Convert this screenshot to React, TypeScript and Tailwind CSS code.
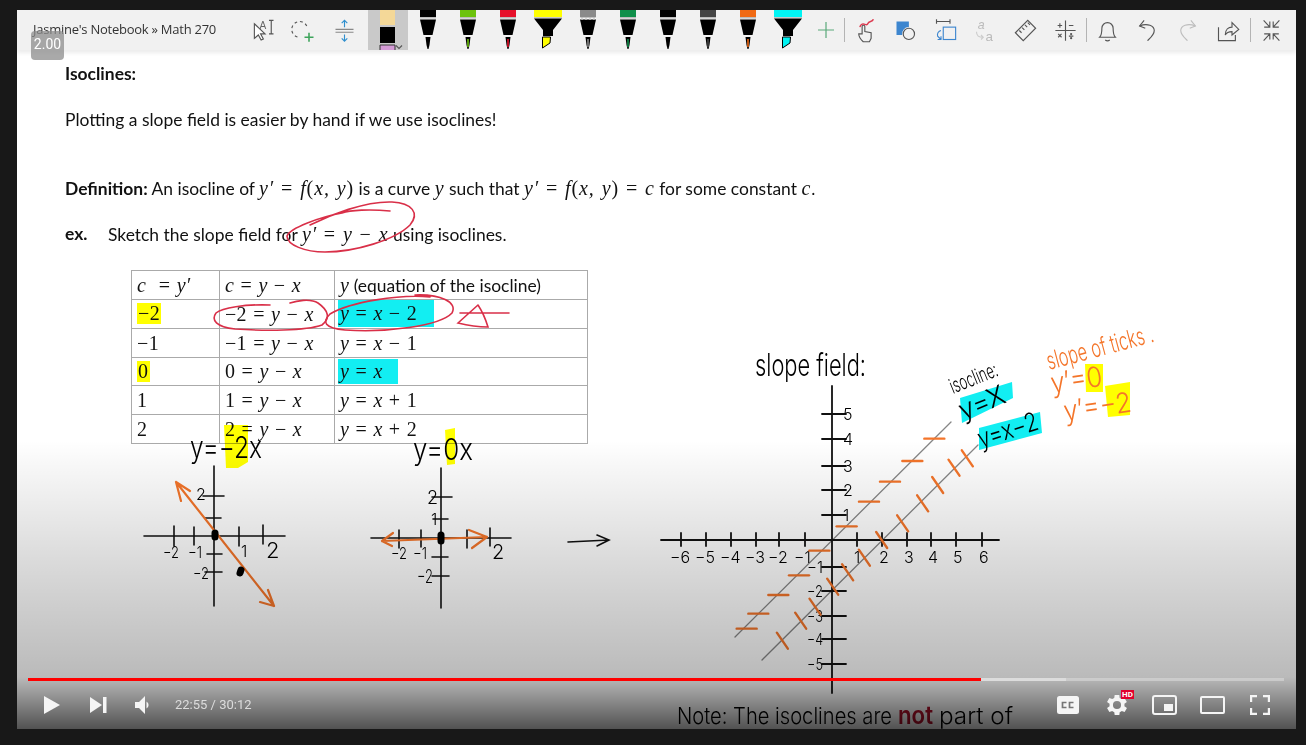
import React from "react";

const I = ({ children }: { children: React.ReactNode }) => (
  <span className="italic font-['Liberation_Serif',serif] text-[20px] tracking-[0.3px] [word-spacing:1px]">{children}</span>
);
const D = ({ children }: { children: React.ReactNode }) => (
  <span className="italic font-['Liberation_Serif',serif] text-[20px] tracking-[0.9px] [word-spacing:1px]">{children}</span>
);
const M = ({ children }: { children: React.ReactNode }) => (
  <span className="font-['Liberation_Serif',serif] text-[20px] tracking-[0.5px]">{children}</span>
);

const Slot = ({ children }: { children: React.ReactNode }) => (
  <div className="w-10 h-10 flex items-center justify-center shrink-0">{children}</div>
);
const Sep = () => <div className="w-px h-6 bg-[#b4b4b4] shrink-0" />;

const Pen = ({ cap, tip, zig }: { cap: string; tip: string; zig?: boolean }) => (
  <Slot>
    <svg width="24" height="40" viewBox="0 0 24 40">
      <rect x="4" y="0" width="16" height="7" fill={cap} />
      <rect x="4" y="7" width="16" height="1.5" fill="#bdbdbd" />
      <path d="M4 9.5H20L16.5 25H7.5Z" fill="#000" />
      {zig && <path d="M4 7L6 10L8 7.5L10 10L12 7.5L14 10L16 7.5L18 10L20 7V9H4Z" fill="#fff" />}
      <path d="M9.5 27H14.5L13.5 35L12.5 39H11.5L10.5 35Z" fill="#000" />
      <path d="M11.2 29H12.8V37H11.2Z" fill={tip} />
    </svg>
  </Slot>
);

const Marker = ({ cap }: { cap: string }) => (
  <Slot>
    <svg width="30" height="40" viewBox="0 0 30 40">
      <rect x="1" y="0" width="28" height="7" fill={cap} />
      <rect x="1" y="7" width="28" height="1.2" fill="#c8c8c8" />
      <path d="M1 8.5H29L20 20L20 26H10V20Z" fill="#000" />
      <path d="M9.5 27H17.5L17 33L9.5 38Z" fill={cap} stroke="#000" strokeWidth="1" />
    </svg>
  </Slot>
);

const Eraser = () => (
  <div className="w-10 h-10 bg-[#c9c9c9] relative shrink-0 flex justify-center overflow-hidden">
    <svg width="40" height="40" viewBox="0 0 40 40">
      <rect x="12" y="0" width="15" height="15" fill="#f4d898" />
      <rect x="12" y="17" width="15" height="16" fill="#000" />
      <path d="M12 35H27V41Q27 47 20 47 12 47 12 41Z" fill="#d49ad6" stroke="#333" />
      <path d="M28 35.5L31 38.5L34 35.5" fill="none" stroke="#555" strokeWidth="1.1" />
    </svg>
  </div>
);

const Ic = ({ children }: { children: React.ReactNode }) => (
  <Slot>
    <svg width="27" height="27" viewBox="0 0 24 24" fill="none" stroke="#555" strokeWidth="1">
      {children}
    </svg>
  </Slot>
);

const Toolbar = () => (
  <div className="h-10 bg-[#f1f1f1] flex items-center shrink-0 shadow-[0_3px_4px_rgba(0,0,0,0.08)] relative">
    <div className="w-[227px] pl-[16px] text-[13px] text-[#333] font-['Open_Sans',sans-serif] -mt-[1px] tracking-[-0.25px] whitespace-nowrap shrink-0 relative z-10">
      Jasmine's Notebook » Math 270
    </div>
    <Ic>
      <path d="M3 6V19L6.5 16L9 20.5L11 19.5L8.5 15H12.5Z" fill="#fff" />
      <text x="7.5" y="11" fontSize="9" fill="#666" stroke="none" fontFamily="Liberation Sans">A</text>
      <path d="M16 3H20M18 3V15M16 15H20" />
    </Ic>
    <Ic>
      <path d="M14 8A7 7 0 1 0 8 18" strokeDasharray="2.5 2.5" />
      <path d="M16 14V22M12 18H20" stroke="#3da45b" strokeWidth="1.4" />
    </Ic>
    <Ic>
      <path d="M4 11H20M4 13.5H20" stroke="#888" />
      <path d="M12 3V9M9.5 5.5L12 3L14.5 5.5M12 15.5V21.5M9.5 19L12 21.5L14.5 19" stroke="#2f8fce" />
    </Ic>
    <div className="w-1 shrink-0" />
    <Eraser />
    <Pen cap="#000" tip="#000" />
    <Pen cap="#6cc20c" tip="#6cc20c" />
    <Pen cap="#e6102a" tip="#e6102a" />
    <Marker cap="#ffff00" />
    <Pen cap="#8a8a8a" tip="#8a8a8a" zig />
    <Pen cap="#0f8f4a" tip="#0f8f4a" />
    <Pen cap="#000" tip="#000" />
    <Pen cap="#444" tip="#444" />
    <Pen cap="#f06a14" tip="#f06a14" />
    <Marker cap="#00f4f4" />
    <div className="w-[36px] h-10 flex items-center justify-center shrink-0">
      <svg width="18" height="18" viewBox="0 0 18 18">
        <path d="M9 1V17M1 9H17" stroke="#5aa97a" strokeWidth="1.2" />
      </svg>
    </div>
    <Sep />
    <Ic>
      <path d="M10 22C8 20 6 17 6 15L9 15V8.5A1.2 1.2 0 0 1 11.4 8.5V13L17 14V19L15.5 22Z" />
      <path d="M7 9C9 3 13 9 14 6S18 5 19 2" stroke="#dc3b50" strokeWidth="1.3" />
    </Ic>
    <Ic>
      <path d="M4 4H15V9A6 6 0 0 0 9 16H4Z" fill="#3d86cf" stroke="none" />
      <circle cx="15" cy="15" r="5" />
    </Ic>
    <Ic>
      <path d="M4 2V6M16 2V6M4 4H16" />
      <rect x="10" y="9" width="11" height="11" stroke="#3d86cf" />
      <path d="M8 12A4 4 0 0 0 5 17L8 20M5 20H8V17" stroke="#3d86cf" />
    </Ic>
    <Ic>
      <text x="5" y="11" fontSize="11" fontStyle="italic" fill="#bbb" stroke="none" fontFamily="Liberation Sans">a</text>
      <text x="12" y="21" fontSize="12" fill="#bbb" stroke="none" fontFamily="Liberation Sans">a</text>
      <path d="M4 13C4 17 6 18 10 18M8 16L10 18L8 20" stroke="#ccc" />
    </Ic>
    <Ic>
      <path d="M3 14L14 3L21 10L10 21Z" />
      <path d="M6.5 12L8.5 14M9 9.5L11 11.5M11.5 7L13.5 9M14 5L16 7" />
    </Ic>
    <Ic>
      <path d="M12 3V21M3 12H21" />
      <path d="M5 7.5H9M7 5.5V9.5M15 7.5H19M5.5 15L8.5 18M8.5 15L5.5 18M15 17H19" strokeWidth="1" />
      <circle cx="17" cy="15.2" r=".5" />
      <circle cx="17" cy="18.8" r=".5" />
    </Ic>
    <div className="w-px shrink-0" />
    <Sep />
    <Ic>
      <path d="M5 18C7 16 7 13 7 10A5 5 0 0 1 17 10C17 13 17 16 19 18Z" />
      <path d="M10 20.5Q12 22 14 20.5" />
    </Ic>
    <Ic>
      <path d="M9 3L5 8L10 10" />
      <path d="M5 8C12 5 18 8 18 12C18 16 14 19 12 21" />
    </Ic>
    <Ic>
      <g stroke="#bdbdbd">
        <path d="M15 3L19 8L14 10" />
        <path d="M19 8C12 5 6 8 6 12C6 16 10 19 12 21" />
      </g>
    </Ic>
    <Ic>
      <path d="M4 9V21H19V16" />
      <path d="M10 16C10 11 13 9 16 9V5L22 11L16 16V13C13 13 11 14 10 16Z" />
    </Ic>
    <div className="w-[3px] shrink-0" />
    <Sep />
    <Ic>
      <path d="M5 3L10.5 9M10.5 4V9H5.5M19 3L13.5 9M13.5 4V9H18.5M5 21L10.5 15M10.5 20V15H5.5M19 21L13.5 15M13.5 20V15H18.5" />
    </Ic>
  </div>
);

const rows: [React.ReactNode, React.ReactNode, React.ReactNode][] = [
  [<I>c{"\u00A0 "}<span className="not-italic">=</span> y′</I>, <I>c <span className="not-italic">=</span> y <span className="not-italic">−</span> x</I>, <span><I>y</I> (equation of the isocline)</span>],
  [<span className="bg-[#ffff00] px-[1px] inline-block leading-[21px]"><M>−2</M></span>, <I><span className="not-italic">−2 =</span> y <span className="not-italic">−</span> x</I>, <span className="bg-[#12eef2] inline-block -ml-[2px] pl-[2px] py-[2px] w-[96px] leading-[22px]"><I>y <span className="not-italic">=</span> x <span className="not-italic">− 2</span></I></span>],
  [<M>−1</M>, <I><span className="not-italic">−1 =</span> y <span className="not-italic">−</span> x</I>, <I>y <span className="not-italic">=</span> x <span className="not-italic">− 1</span></I>],
  [<span className="bg-[#ffff00] px-[1px] inline-block leading-[21px]"><M>0</M></span>, <I><span className="not-italic">0 =</span> y <span className="not-italic">−</span> x</I>, <span className="bg-[#12eef2] inline-block -ml-[2px] pl-[2px] w-[60px] leading-[25px]"><I>y <span className="not-italic">=</span> x</I></span>],
  [<M>1</M>, <I><span className="not-italic">1 =</span> y <span className="not-italic">−</span> x</I>, <I>y <span className="not-italic">=</span> x <span className="not-italic">+ 1</span></I>],
  [<M>2</M>, <I><span className="not-italic">2 =</span> y <span className="not-italic">−</span> x</I>, <I>y <span className="not-italic">=</span> x <span className="not-italic">+ 2</span></I>],
];

const Table = () => (
  <div className="ml-[114px] mt-[25px] w-[457px] grid grid-cols-[88px_115px_1fr] border border-[#aaaaaa] border-b-0 text-[#111]">
    {rows.map((r, i) =>
      r.map((c, j) => (
        <div
          key={`${i}-${j}`}
          className={`h-[28.85px] flex items-center pl-[5px] border-b border-[#aaaaaa] whitespace-nowrap ${j < 2 ? "border-r" : ""}`}
        >
          {c}
        </div>
      ))
    )}
  </div>
);

const Hw = ({
  x, y, w, s, rot = 0, c = "#000", children,
}: { x: number; y: number; w?: number; s: number; rot?: number; c?: string; children: React.ReactNode }) => (
  <text
    x={x}
    y={y}
    fontSize={s}
    fill={c}
    fontWeight={300}
    fontFamily="'Inter','Roboto',sans-serif"
    textLength={w}
    lengthAdjust={w ? "spacingAndGlyphs" : undefined}
    transform={rot ? `rotate(${rot} ${x} ${y})` : undefined}
  >
    {children}
  </text>
);

const OR = "#f4752a";
const RED = "#d92f48";

const Ticks3H: [number, number][] = [[853, 326], [787, 393], [720, 455], [657, 515], [590, 589], [508, 662], [447, 736], [385, 795], [325, 851], [290, 896]];
const Ticks3S: [number, number][] = [[952, 385], [912, 413], [863, 465], [818, 520], [758, 580], [695, 630], [643, 683], [593, 727], [548, 770], [495, 830], [452, 872], [397, 932]];
const hx = [681, 706, 731, 756, 779, 805, 857, 882, 907, 931, 956, 982];
const hl = ["−6", "−5", "−4", "−3", "−2", "−1", "1", "2", "3", "4", "5", "6"];
const vy = [414, 439, 466, 490, 515, 567, 591, 616, 639, 664];

const Ink = () => (
  <svg className="absolute inset-0 w-full h-full" viewBox="17 10 1279 719" fill="none" strokeLinecap="round">
    <g stroke={RED} strokeWidth="1.6">
      <path d="M390 211C370 209 350 210 342 213C320 217 290 228 287 236C287 245 305 252 325 252C355 252 395 240 410 225C420 213 412 203 392 202C365 201 330 215 310 225" />
      <path d="M270 305C245 304 222 308 216 313C211 320 216 327 235 329C265 331 305 331 322 325C331 318 328 310 318 303C310 298 296 301 290 303" />
      <path d="M430 297C400 294 350 302 330 314C322 322 324 328 345 330C385 333 440 326 452 313C458 302 440 294 415 295" />
      <path d="M460 313H509M478 305L458 323C470 326 480 327 488 327Q484 314 478 305" />
    </g>
    <path d="M224 425H248V462L238 468H226Z" fill="#ffff00" className="mix-blend-multiply" />
    <path d="M445 430L455 428V464L447 465Z" fill="#ffff00" className="mix-blend-multiply" />
    <Hw x={190} y={458} s={30} w={72}>y=−2x</Hw>
    <Hw x={413} y={460} s={30} w={60}>y=0x</Hw>
    <g stroke="#111" strokeWidth="1.6">
      <path d="M214 466V606M144 536H285" />
      <path d="M203 496H224M205 518H221M207 554H222M205 572H222" />
      <path d="M174 526V546M194 527V545M239 527V546M263 525V544" />
      <path d="M441 468V608M371 538H511" />
      <path d="M432 497H452M433 519H448M432 557H448M432 576H449" />
      <path d="M399 530V548M421 530V547M467 530V548M490 528V546" />
      <path d="M568 542L609 540M597 535L609 540L597 546" />
    </g>
    <g stroke={OR} strokeWidth="2.2">
      <path d="M176 482L274 606M176 482L190 491M176 482L181 501M274 606L260 602M274 606L268 590" />
      <path d="M382 541L487 537M382 541L393 533M382 541L392 546M487 537L469 530M487 537L472 548" />
    </g>
    <g stroke="#000" strokeWidth="7">
      <path d="M215 533V537M241 570L240 573" />
      <path d="M441 535V541" />
    </g>
    <g>
      <Hw x={163} y={558} s={16} w={16}>−2</Hw>
      <Hw x={188} y={558} s={16} w={14}>−1</Hw>
      <Hw x={241} y={557} s={16}>1</Hw>
      <Hw x={266} y={558} s={22}>2</Hw>
      <Hw x={196} y={500} s={16}>2</Hw>
      <Hw x={193} y={579} s={16} w={16}>−2</Hw>
      <Hw x={391} y={559} s={16} w={16}>−2</Hw>
      <Hw x={413} y={559} s={16} w={14}>−1</Hw>
      <Hw x={492} y={559} s={20}>2</Hw>
      <Hw x={427} y={504} s={18}>2</Hw>
      <Hw x={431} y={525} s={16}>1</Hw>
      <Hw x={417} y={583} s={18} w={16}>−2</Hw>
    </g>
    <Hw x={755} y={376} s={31} w={111}>slope field:</Hw>
    <path d="M960 398L1012 382L1013 398L962 423Z" fill="#12eef2" />
    <path d="M979 428L1040 412L1042 433L979 450Z" fill="#12eef2" />
    <Hw x={953} y={394} s={21} w={50} rot={-22}>isocline:</Hw>
    <Hw x={963} y={420} s={27} w={48} rot={-22}>y=X</Hw>
    <Hw x={981} y={448} s={26} w={62} rot={-18}>y=x−2</Hw>
    <path d="M1085 364H1103V392H1086Z" fill="#ffff00" className="mix-blend-multiply" />
    <path d="M1105 386L1130 382V415L1108 417Z" fill="#ffff00" className="mix-blend-multiply" />
    <g>
      <Hw x={1049} y={370} s={25} w={110} c={OR} rot={-15}>slope of ticks .</Hw>
      <Hw x={1052} y={393} s={28} w={52} c={OR} rot={-8}>y′=0</Hw>
      <Hw x={1065} y={421} s={28} w={68} c={OR} rot={-8}>y′=−2</Hw>
    </g>
    <g stroke="#868686" strokeWidth="1.3">
      <path d="M735 637L951 422M762 660L978 445" />
    </g>
    <g stroke="#111" strokeWidth="1.8">
      <path d="M832 386V693M661 540H999" />
      {hx.map((x) => <path key={x} d={`M${x} 533V546`} />)}
      {vy.map((y) => <path key={y} d={`M822 ${y}H846`} />)}
    </g>
    {hx.map((x, i) => (
      <Hw key={x} x={x - (i < 6 ? 11 : 3)} y={563} s={16}>{hl[i]}</Hw>
    ))}
    {["5", "4", "3", "2", "1"].map((t, i) => <Hw key={t} x={843} y={vy[i] + 6} s={16}>{t}</Hw>)}
    {["−1", "−2", "−3", "−4", "−5"].map((t, i) => <Hw key={t} x={807} y={vy[i + 5] + 6} s={16} w={16}>{t}</Hw>)}
    <g stroke={OR} strokeWidth="2.4">
      {Ticks3H.map(([a, b]) => {
        const x = 650 + a / 3, y = 330 + b / 3;
        return <path key={a} d={`M${x - 10} ${y}H${x + 10}`} />;
      })}
      {Ticks3S.map(([a, b]) => {
        const x = 650 + a / 3, y = 330 + b / 3;
        return <path key={a} d={`M${x - 5.5} ${y - 8}L${x + 5.5} ${y + 8}`} />;
      })}
    </g>
    <g>
      <Hw x={677} y={724} s={23} w={215}>Note: The isoclines are</Hw>
      <text x={898} y={724} fontSize={25} fill="#b0102a" fontFamily="Inter" fontWeight={600} textLength={35} lengthAdjust="spacingAndGlyphs">not</text>
      <Hw x={939} y={724} s={23} w={74}>part of</Hw>
    </g>
  </svg>
);

const Controls = () => (
  <div className="absolute left-0 right-0 bottom-0 px-[11px] pr-[12px] text-white">
    <div className="h-[3px] bg-white/30 relative">
      <div className="absolute left-0 top-0 h-full w-[1038px] bg-[#dcdcdc]" />
      <div className="absolute left-0 top-0 h-full w-[953px] bg-[#ff0000]" />
    </div>
    <div className="h-[48px] flex items-center">
      <svg width="16" height="18" viewBox="0 0 16 18" className="ml-[16px] -mt-[1px]"><path d="M0 0L16 9L0 18Z" fill="#f5f5f5" /></svg>
      <svg width="17" height="16" viewBox="0 0 17 16" className="ml-[30px] -mt-[1px]"><path d="M0 0L12 8L0 16ZM13 0H16.5V16H13Z" fill="#f5f5f5" /></svg>
      <svg width="16" height="18" viewBox="0 0 16 18" className="ml-[28px] -mt-[1px]"><path d="M0 6H4L10 0V18L4 12H0Z" fill="#f5f5f5" /><path d="M11.5 5.5A4 4 0 0 1 11.5 12.5Z" fill="#f5f5f5" /></svg>
      <span className="ml-[24px] text-[13px] font-['Roboto',sans-serif] text-[#dcdcdc] -mt-[1px]">22:55 / 30:12</span>
      <div className="flex-1" />
      <svg width="22" height="18" viewBox="0 0 22 18" className="-mt-[1px]"><rect width="22" height="18" rx="2.5" fill="#f5f5f5" /><path d="M9.5 6.5H5.5V11.5H9.5M16.5 6.5H12.5V11.5H16.5" stroke="#777" strokeWidth="1.7" fill="none" /></svg>
      <div className="relative ml-[27px] -mt-[1px] w-[22px] h-[22px]">
        <svg width="22" height="22" viewBox="2.5 2.5 19 19"><path fill="#f5f5f5" fillRule="evenodd" d="M19.4 13a7.7 7.7 0 0 0 0-2l2.1-1.6-2-3.5-2.5 1a7.6 7.6 0 0 0-1.7-1L15 3.3h-4l-.4 2.6a7.6 7.6 0 0 0-1.7 1l-2.5-1-2 3.5L6.6 11a7.7 7.7 0 0 0 0 2l-2.2 1.6 2 3.5 2.5-1a7.6 7.6 0 0 0 1.7 1l.4 2.6h4l.4-2.6a7.6 7.6 0 0 0 1.7-1l2.5 1 2-3.5ZM13 15.5a3.5 3.5 0 1 1 0-7 3.5 3.5 0 0 1 0 7Z" transform="translate(-1 0)" /></svg>
        <span className="absolute -top-[4px] left-[15px] w-[13px] h-[9px] bg-[#e1002d] text-[8px] leading-[9px] font-bold text-center font-['Roboto',sans-serif] text-white">HD</span>
      </div>
      <svg width="25" height="20" viewBox="0 0 25 20" className="ml-[24px] -mt-[1px]"><rect x="1" y="1" width="23" height="18" rx="2" stroke="#f5f5f5" strokeWidth="2" fill="none" /><rect x="12" y="9" width="9" height="7" fill="#f5f5f5" /></svg>
      <svg width="25" height="18" viewBox="0 0 25 18" className="ml-[23px] -mt-[1px]"><rect x="1" y="1" width="23" height="16" rx="1" stroke="#f5f5f5" strokeWidth="2" fill="none" /></svg>
      <svg width="20" height="20" viewBox="0 0 20 20" className="ml-[25px] mr-[14px] -mt-[1px]"><path d="M1 7V1H7M13 1H19V7M19 13V19H13M7 19H1V13" stroke="#f5f5f5" strokeWidth="2.4" fill="none" /></svg>
    </div>
  </div>
);

export default function App() {
  return (
    <div className="h-[745px] w-[1306px] bg-[#181818] pt-[10px] pl-[17px] overflow-hidden">
      <div className="relative w-[1279px] h-[719px] bg-white overflow-hidden flex flex-col text-[#111] font-['Lato',sans-serif] text-[17.45px]">
        <Toolbar />
        <div className="pl-[48px] pt-[13px] flex flex-col">
          <div className="font-bold h-[22px] leading-[22px]">Isoclines:</div>
          <div className="mt-[24px] h-[22px] leading-[22px]">Plotting a slope field is easier by hand if we use isoclines!</div>
          <div className="mt-[46px] h-[22px] leading-[22px] whitespace-nowrap">
            <b>Definition:</b> An isocline of <D>y′ <span className="not-italic">=</span> f<span className="not-italic">(</span>x, y<span className="not-italic">)</span></D> is a curve <D>y</D> such that <D>y′ <span className="not-italic">=</span> f<span className="not-italic">(</span>x, y<span className="not-italic">) =</span> c</D> for some constant <D>c</D>.
          </div>
          <div className="mt-[24px] h-[22px] leading-[22px] flex whitespace-nowrap">
            <b className="w-[43px]">ex.</b>
            <span>Sketch the slope field for <D>y′ <span className="not-italic">=</span> y <span className="not-italic">−</span> x</D> using isoclines.</span>
          </div>
        </div>
        <Table />
        <Ink />
        <div className="absolute left-0 right-0 bottom-0 h-[289px] bg-[linear-gradient(to_bottom,rgba(0,0,0,0)_0%,rgba(0,0,0,0.14)_41%,rgba(0,0,0,0.27)_82%,rgba(0,0,0,0.68)_100%)]" />
        <div className="absolute left-[14px] top-[21px] w-[33px] h-[29px] rounded-[4px] bg-[#8c8c8c]/75 text-white text-[14px] leading-[26px] text-center font-['Roboto',sans-serif] z-20">2.00</div>
        <Controls />
      </div>
    </div>
  );
}
